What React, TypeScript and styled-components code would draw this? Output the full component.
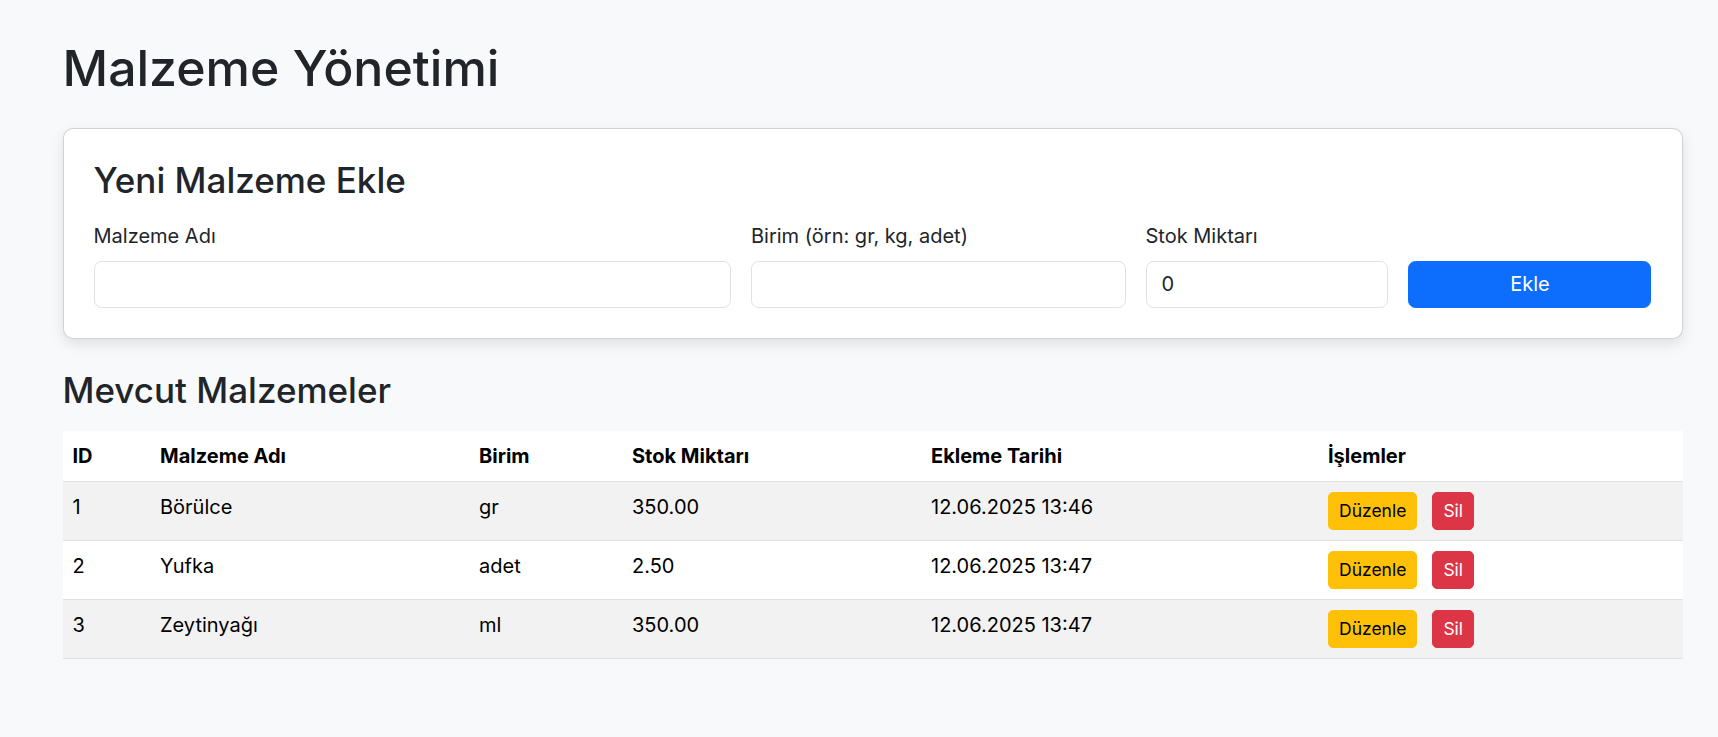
import React from "react";
import styled, { createGlobalStyle, css } from "styled-components";

const GlobalStyle = createGlobalStyle`
  html,
  body {
    margin: 0;
    background: #f8f9fa;
  }
  body {
    font-family: Inter, "Noto Sans", "Liberation Sans", sans-serif;
    font-size: 20px;
    line-height: 1.5;
    color: #212529;
  }
  *,
  *::before,
  *::after {
    box-sizing: border-box;
  }
`;

const Page = styled.div`
  width: 1620px;
  margin-left: 62.5px;
  padding-top: 37.5px;
`;

const PageTitle = styled.h1`
  margin: 0 0 30px;
  font-size: 50px;
  font-weight: 500;
  line-height: 1.2;
`;

const Card = styled.div`
  background: #fff;
  border: 1px solid rgba(0, 0, 0, 0.175);
  border-radius: 10px;
  box-shadow: 0 5px 14px rgba(0, 0, 0, 0.1);
  padding: 30px;
  margin-bottom: 30px;
`;

const SubTitle = styled.h3`
  margin: 0 0 20px;
  font-size: 35px;
  font-weight: 500;
  line-height: 1.2;
`;

const FormRow = styled.div`
  display: flex;
  align-items: flex-end;
  margin: 0 -10px;
`;

const FormCol = styled.div<{ $span: number }>`
  flex: 0 0 auto;
  width: ${(p) => (p.$span / 12) * 100}%;
  padding: 0 10px;
`;

const Label = styled.label`
  display: block;
  margin-bottom: 10px;
  font-size: 20px;
`;

const Input = styled.input`
  display: block;
  width: 100%;
  height: 47px;
  padding: 7.5px 15px;
  font-family: inherit;
  font-size: 20px;
  line-height: 1.5;
  color: #212529;
  background: #fff;
  border: 1px solid #dee2e6;
  border-radius: 7.5px;
  outline: none;
`;

const PrimaryButton = styled.button`
  display: block;
  width: 100%;
  height: 47px;
  padding: 7.5px 15px;
  font-family: inherit;
  font-size: 20px;
  line-height: 1.5;
  color: #fff;
  background: #0d6efd;
  border: 1px solid #0d6efd;
  border-radius: 7.5px;
`;

const Table = styled.table`
  width: 100%;
  border-collapse: collapse;
  color: #000;
  background: #fff;
`;

const Th = styled.th<{ $w: number }>`
  width: ${(p) => p.$w}px;
  padding: 10px;
  text-align: left;
  vertical-align: bottom;
  font-weight: 700;
  border-bottom: 1px solid #dee2e6;
`;

const Tr = styled.tr<{ $striped?: boolean }>`
  background: ${(p) => (p.$striped ? "#f2f2f2" : "#fff")};
`;

const Td = styled.td`
  padding: 10px;
  vertical-align: top;
  border-bottom: 1px solid #dee2e6;
`;

const ActionButton = styled.button<{ $variant: "warning" | "danger" }>`
  padding: 5px 10px;
  margin-right: 15px;
  font-family: inherit;
  font-size: 17.5px;
  line-height: 1.5;
  border-radius: 5px;
  ${(p) =>
    p.$variant === "warning"
      ? css`
          color: #000;
          background: #ffc107;
          border: 1px solid #ffc107;
        `
      : css`
          color: #fff;
          background: #dc3545;
          border: 1px solid #dc3545;
        `}
`;

const columns = [
  { label: "ID", w: 87.5 },
  { label: "Malzeme Adı", w: 319 },
  { label: "Birim", w: 153 },
  { label: "Stok Miktarı", w: 299 },
  { label: "Ekleme Tarihi", w: 397 },
  { label: "İşlemler", w: 364.5 },
];

const rows = [
  { id: 1, name: "Börülce", unit: "gr", stock: "350.00", date: "12.06.2025 13:46" },
  { id: 2, name: "Yufka", unit: "adet", stock: "2.50", date: "12.06.2025 13:47" },
  { id: 3, name: "Zeytinyağı", unit: "ml", stock: "350.00", date: "12.06.2025 13:47" },
];

export default function App() {
  return (
    <>
      <GlobalStyle />
      <Page>
        <PageTitle>Malzeme Yönetimi</PageTitle>

        <Card>
          <SubTitle>Yeni Malzeme Ekle</SubTitle>
          <FormRow>
            <FormCol $span={5}>
              <Label>Malzeme Adı</Label>
              <Input type="text" />
            </FormCol>
            <FormCol $span={3}>
              <Label>Birim (örn: gr, kg, adet)</Label>
              <Input type="text" />
            </FormCol>
            <FormCol $span={2}>
              <Label>Stok Miktarı</Label>
              <Input type="text" defaultValue="0" />
            </FormCol>
            <FormCol $span={2}>
              <PrimaryButton type="button">Ekle</PrimaryButton>
            </FormCol>
          </FormRow>
        </Card>

        <SubTitle as="h2">Mevcut Malzemeler</SubTitle>
        <Table>
          <thead>
            <tr>
              {columns.map((c) => (
                <Th key={c.label} $w={c.w}>
                  {c.label}
                </Th>
              ))}
            </tr>
          </thead>
          <tbody>
            {rows.map((r, i) => (
              <Tr key={r.id} $striped={i % 2 === 0}>
                <Td>{r.id}</Td>
                <Td>{r.name}</Td>
                <Td>{r.unit}</Td>
                <Td>{r.stock}</Td>
                <Td>{r.date}</Td>
                <Td>
                  <ActionButton $variant="warning">Düzenle</ActionButton>
                  <ActionButton $variant="danger">Sil</ActionButton>
                </Td>
              </Tr>
            ))}
          </tbody>
        </Table>
      </Page>
    </>
  );
}
